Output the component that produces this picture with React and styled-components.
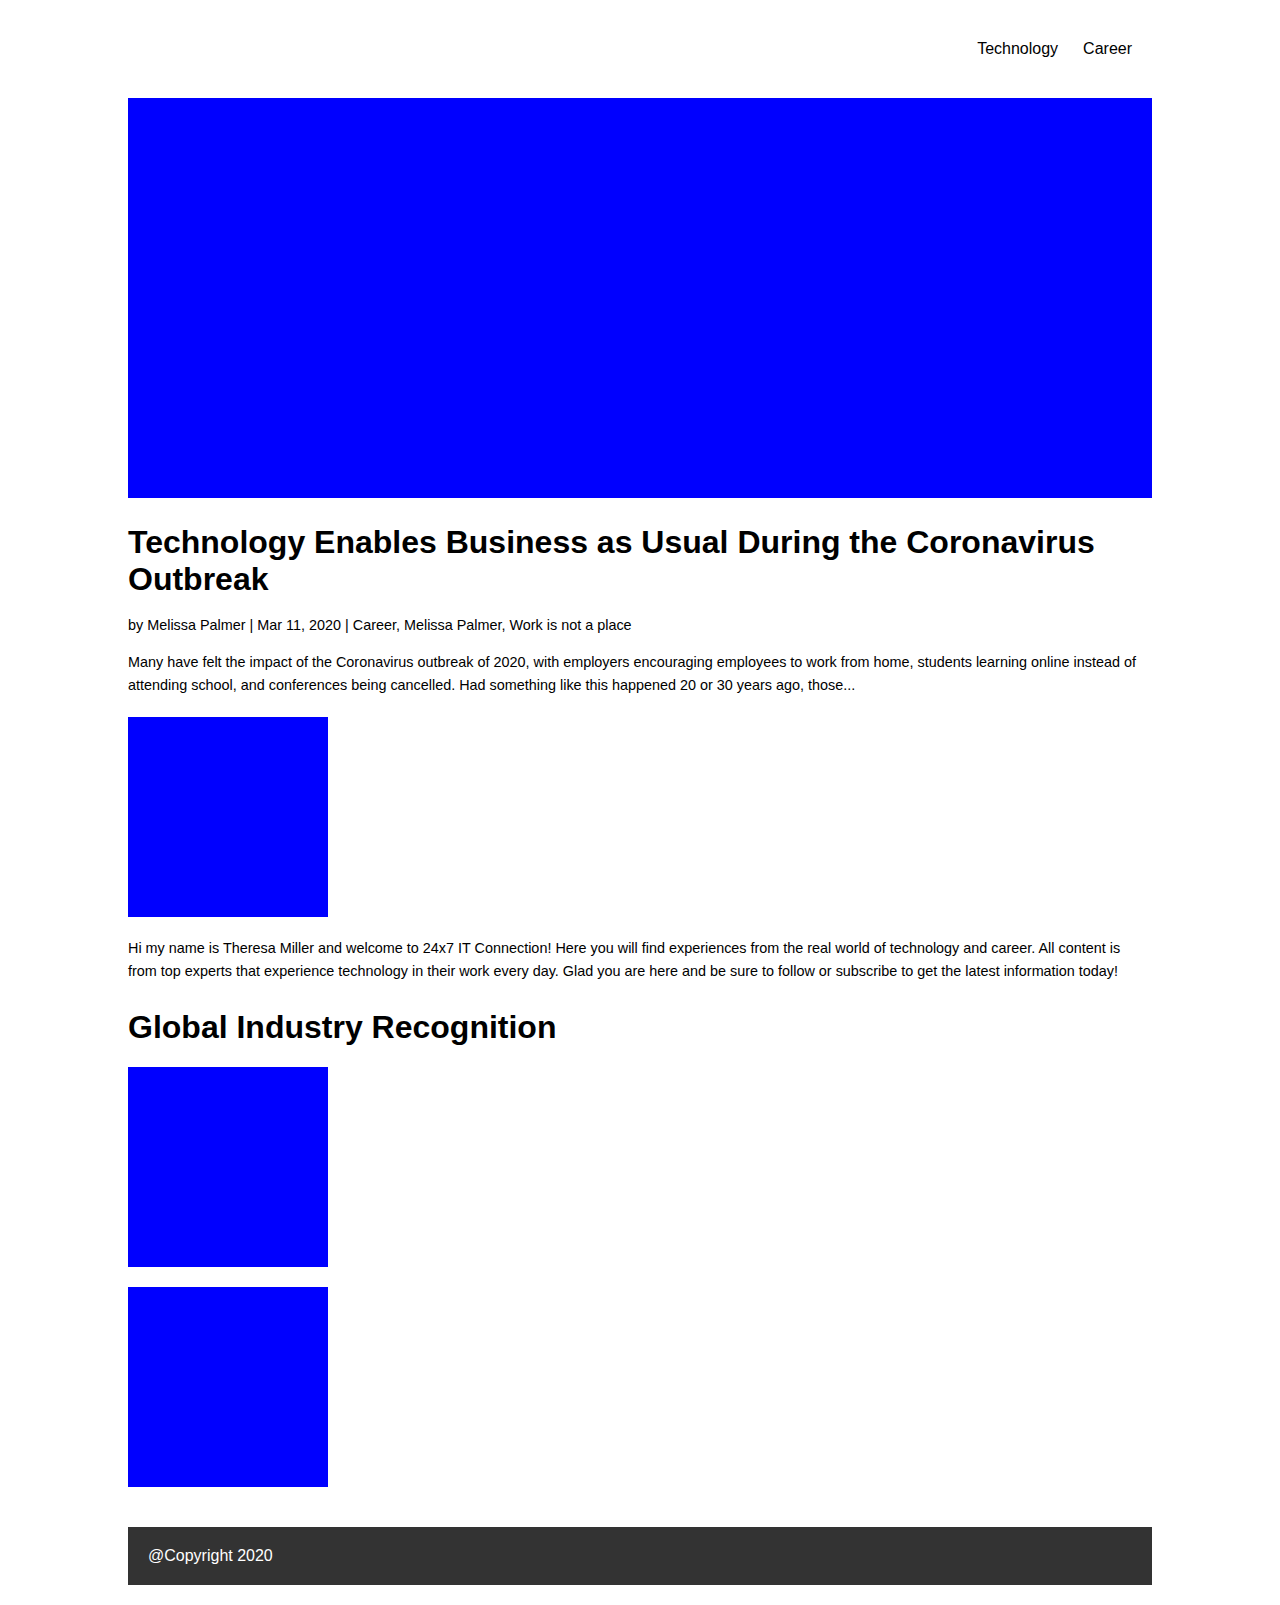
import styled, { createGlobalStyle } from 'styled-components';

const GlobalStyle = createGlobalStyle`
  body {
    margin: 0;
    font-family: "Liberation Sans", Arial, sans-serif;
    color: #000;
    background: #fff;
  }
`;

const Page = styled.div`
  max-width: 1024px;
  margin: 0 auto;
  padding-bottom: 20px;
`;

const Header = styled.header`
  height: 98px;
  box-sizing: border-box;
  padding: 40px 20px 0;
  display: flex;
  justify-content: flex-end;
  align-items: flex-start;
`;

const NavList = styled.nav`
  display: flex;
  gap: 25px;
`;

const NavLink = styled.a`
  font-size: 16px;
  color: #000;
  text-decoration: none;
  cursor: pointer;
`;

const Picture = styled.div`
  background-color: #0000ff;
  width: ${(p) => (p.$wide ? '100%' : '200px')};
  height: ${(p) => (p.$wide ? '400px' : '200px')};
  margin-top: ${(p) => p.$top || 0}px;
`;

const Title = styled.h1`
  font-size: 32px;
  font-weight: 700;
  line-height: normal;
  margin: ${(p) => p.$top}px 0 0;
`;

const Meta = styled.p`
  font-size: 14.4px;
  line-height: 22.4px;
  margin: 16px 0 0;
`;

const Text = styled.p`
  font-size: 14.4px;
  line-height: 22.4px;
  margin: ${(p) => p.$top}px 0 0;
`;

const Footer = styled.footer`
  margin-top: 40px;
  background-color: #333;
  color: #fff;
  padding: 20px;
  font-size: 16px;
  line-height: normal;
`;

export default function App() {
  return (
    <>
      <GlobalStyle />
      <Page>
        <Header>
          <NavList>
            <NavLink>Technology</NavLink>
            <NavLink>Career</NavLink>
          </NavList>
        </Header>

        <Picture $wide />
        <Title $top={26}>
          Technology Enables Business as Usual During the Coronavirus Outbreak
        </Title>
        <Meta>by Melissa Palmer | Mar 11, 2020 | Career, Melissa Palmer, Work is not a place</Meta>
        <Text $top={15}>
          Many have felt the impact of the Coronavirus outbreak of 2020, with employers encouraging
          employees to work from home, students learning online instead of attending school, and
          conferences being cancelled. Had something like this happened 20 or 30 years ago, those...
        </Text>

        <Picture $top={21} />
        <Text $top={20}>
          Hi my name is Theresa Miller and welcome to 24x7 IT Connection! Here you will find
          experiences from the real world of technology and career. All content is from top experts
          that experience technology in their work every day. Glad you are here and be sure to follow
          or subscribe to get the latest information today!
        </Text>

        <Title $top={27}>Global Industry Recognition</Title>
        <Picture $top={21} />
        <Picture $top={20} />

        <Footer>@Copyright 2020</Footer>
      </Page>
    </>
  );
}
